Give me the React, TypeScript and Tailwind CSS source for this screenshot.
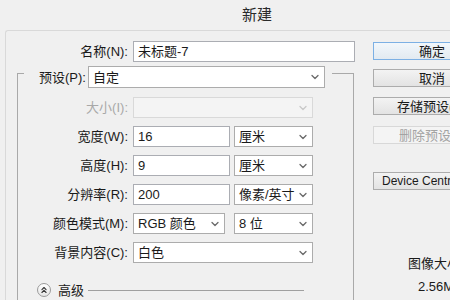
import { ChevronDown, ChevronsUp } from 'lucide-react';
import type { ReactNode } from 'react';

// text box / dropdown look of the old win7 dialog
function TextBox({ value, className }: { value: string; className: string }) {
    return (
        <div className={`flex h-[21px] items-center border border-[#abadb3] bg-white pl-[4px] leading-none ${className}`}>
            {value}
        </div>
    );
}

function Select({ value, className, disabled }: { value: string; className: string; disabled?: boolean }) {
    return (
        <div
            className={`flex h-[21px] items-center justify-between border pl-[4px] pr-[3px] leading-none ${
                disabled ? 'border-[#d9d9d9] bg-[#f4f4f4]' : 'border-[#acacac] bg-white'
            } ${className}`}
        >
            <span className="whitespace-nowrap">{value}</span>
            <ChevronDown size={12} strokeWidth={2.6} className={disabled ? 'text-[#c8c8c8]' : 'text-[#6a6a6a]'} />
        </div>
    );
}

function Row({ label, disabled, children }: { label: string; disabled?: boolean; children: ReactNode }) {
    return (
        <div className="flex h-[21px] items-center">
            <div className={`w-[110px] whitespace-nowrap text-right leading-none ${disabled ? 'text-[#a8a8a8]' : ''}`}>{label}</div>
            <div className="ml-[5px] flex items-center gap-[4px]">{children}</div>
        </div>
    );
}

function Btn({ children, primary, disabled, className = '' }: { children: ReactNode; primary?: boolean; disabled?: boolean; className?: string }) {
    let look = 'border-[#acacac] bg-linear-to-b from-[#f3f3f3] to-[#e3e3e3]';
    if (primary) look = 'border-[#7cb0e4] bg-linear-to-b from-[#f2f7fb] to-[#e2eaf1]';
    if (disabled) look = 'border-[#d8d8d8] bg-[#f4f4f4] text-[#a3a3a3]';
    return (
        <div className={`flex h-[18px] w-[118px] items-center whitespace-nowrap border leading-none ${look} ${className}`}>
            {children}
        </div>
    );
}

export default function App() {
    return (
        <div className="h-[300px] w-[450px] overflow-hidden bg-[#f0f0f0] font-['Liberation_Sans','Noto_Sans_CJK_SC',sans-serif] text-[13px] text-[#1a1a1a]">
            <div className="w-[514px]">
                {/* title bar */}
                <div className="flex h-[30px] items-center justify-center text-[15px] text-[#2a2a2a]">新建</div>

                <div className="ml-[5px] flex h-[270px] rounded-tl-[3px] border-l border-t border-[#d9d9d9]">
                    {/* left side: fields */}
                    <div className="w-[349px] flex-none pt-[10px]">
                        <div className="flex h-[20px] items-center">
                            <div className="w-[122px] whitespace-nowrap text-right leading-none">名称(N):</div>
                            <TextBox value="未标题-7" className="ml-[5px] h-[20px] w-[222px]" />
                        </div>

                        {/* preset group box */}
                        <div className="ml-[11px] mt-[12px] h-[240px] w-[337px] border-l border-r border-t border-[#a9a9a9]">
                            <div className="-mt-[8px] ml-[6px] flex h-[22px] w-[308px] items-center bg-[#f0f0f0]">
                                <div className="w-[60px] whitespace-nowrap pl-[15px] leading-none">预设(P):</div>
                                <Select value="自定" className="ml-[4px] h-[22px] w-[237px]" />
                            </div>

                            <div className="mt-[9px] flex flex-col gap-[8px]">
                                <Row label="大小(I):" disabled>
                                    <Select value="" disabled className="w-[180px]" />
                                </Row>
                                <Row label="宽度(W):">
                                    <TextBox value="16" className="w-[97px]" />
                                    <Select value="厘米" className="w-[79px]" />
                                </Row>
                                <Row label="高度(H):">
                                    <TextBox value="9" className="w-[97px]" />
                                    <Select value="厘米" className="w-[79px]" />
                                </Row>
                                <Row label="分辨率(R):">
                                    <TextBox value="200" className="w-[97px]" />
                                    <Select value="像素/英寸" className="w-[79px]" />
                                </Row>
                                <Row label="颜色模式(M):">
                                    <Select value="RGB 颜色" className="w-[92px]" />
                                    <Select value="8 位" className="ml-[5px] w-[79px]" />
                                </Row>
                                <Row label="背景内容(C):">
                                    <Select value="白色" className="w-[180px]" />
                                </Row>
                            </div>

                            {/* advanced toggle */}
                            <div className="mt-[20px] flex h-[14px] items-center">
                                <div className="ml-[19px] flex h-[14px] w-[14px] items-center justify-center rounded-full border border-[#9a9a9a] bg-linear-to-b from-white to-[#e6e6e6]">
                                    <ChevronsUp size={10} strokeWidth={2.6} className="text-[#333]" />
                                </div>
                                <span className="ml-[7px] w-[30px] leading-none">高级</span>
                                <div className="h-px w-[216px] bg-[#a0a0a0]" />
                            </div>
                        </div>
                    </div>

                    {/* right side: buttons */}
                    <div className="ml-[18px] flex w-[118px] flex-none flex-col pt-[11px]">
                        <Btn primary className="justify-center">确定</Btn>
                        <Btn className="mt-[9px] justify-center">取消</Btn>
                        <Btn className="mt-[10px] pl-[23px]">存储预设(S)...</Btn>
                        <Btn disabled className="mt-[11px] pl-[25px]">删除预设(D)...</Btn>
                        <Btn className="mt-[28px] pl-[8px] text-[12px]">Device Central...</Btn>
                        <div className="mt-[66px] whitespace-nowrap pl-[35px] leading-[16px]">图像大小:</div>
                        <div className="mt-[7px] whitespace-nowrap pl-[45px] leading-[16px]">2.56M</div>
                    </div>
                </div>
            </div>
        </div>
    );
}
